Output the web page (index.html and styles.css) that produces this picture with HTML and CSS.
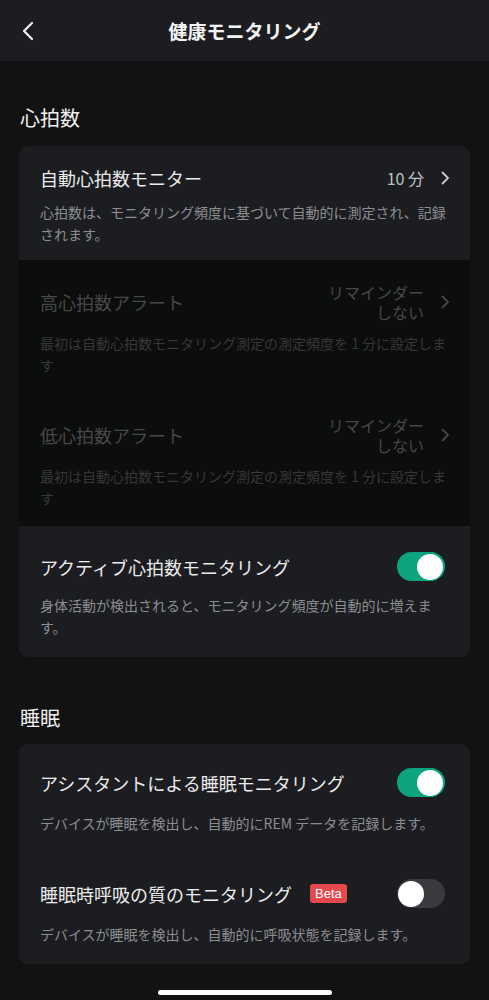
FILE: index.html
```html
<!DOCTYPE html>
<html lang="ja">
<head>
    <meta charset="UTF-8">
    <meta name="viewport" content="width=device-width, initial-scale=1.0">
    <title>健康モニタリング</title>
    <link rel="stylesheet" href="styles.css">
</head>
<body>
    <header class="topbar">
        <div class="back">
            <svg width="14" height="20" viewBox="0 0 14 20"><path d="M11 2 L3 10 L11 18" fill="none" stroke="#f2f2f2" stroke-width="2.2" stroke-linecap="round" stroke-linejoin="round"/></svg>
        </div>
        <h1>健康モニタリング</h1>
        <div class="back"></div>
    </header>

    <main>
        <h2 class="section-title">心拍数</h2>
        <div class="card">
            <div class="row row-first">
                <div class="row-head">
                    <span class="row-title">自動心拍数モニター</span>
                    <span class="value">10 分</span>
                    <svg class="chev" width="9" height="14" viewBox="0 0 9 14"><path d="M1.5 1.5 L7 7 L1.5 12.5" fill="none" stroke="#c9c9cb" stroke-width="1.8" stroke-linecap="round" stroke-linejoin="round"/></svg>
                </div>
                <p class="desc">心拍数は、モニタリング頻度に基づいて自動的に測定され、記録されます。</p>
            </div>

            <div class="row row-off">
                <div class="row-head tall">
                    <span class="row-title">高心拍数アラート</span>
                    <span class="value two-line"><span>リマインダー</span><span>しない</span></span>
                    <svg class="chev" width="9" height="14" viewBox="0 0 9 14"><path d="M1.5 1.5 L7 7 L1.5 12.5" fill="none" stroke="#454648" stroke-width="1.8" stroke-linecap="round" stroke-linejoin="round"/></svg>
                </div>
                <p class="desc">最初は自動心拍数モニタリング測定の測定頻度を 1 分に設定します</p>
            </div>

            <div class="row row-off">
                <div class="row-head tall">
                    <span class="row-title">低心拍数アラート</span>
                    <span class="value two-line"><span>リマインダー</span><span>しない</span></span>
                    <svg class="chev" width="9" height="14" viewBox="0 0 9 14"><path d="M1.5 1.5 L7 7 L1.5 12.5" fill="none" stroke="#454648" stroke-width="1.8" stroke-linecap="round" stroke-linejoin="round"/></svg>
                </div>
                <p class="desc">最初は自動心拍数モニタリング測定の測定頻度を 1 分に設定します</p>
            </div>

            <div class="row row-toggle">
                <div class="row-head">
                    <span class="row-title">アクティブ心拍数モニタリング</span>
                    <span class="toggle on"><span class="knob"></span></span>
                </div>
                <p class="desc">身体活動が検出されると、モニタリング頻度が自動的に増えます。</p>
            </div>
        </div>

        <h2 class="section-title sleep">睡眠</h2>
        <div class="card">
            <div class="row row-sleep">
                <div class="row-head">
                    <span class="row-title">アシスタントによる睡眠モニタリング</span>
                    <span class="toggle on"><span class="knob"></span></span>
                </div>
                <p class="desc">デバイスが睡眠を検出し、自動的にREM データを記録します。</p>
            </div>
            <div class="row row-sleep last">
                <div class="row-head">
                    <span class="row-title">睡眠時呼吸の質のモニタリング <span class="beta">Beta</span></span>
                    <span class="toggle"><span class="knob"></span></span>
                </div>
                <p class="desc">デバイスが睡眠を検出し、自動的に呼吸状態を記録します。</p>
            </div>
        </div>
    </main>

    <div class="home-bar"></div>
</body>
</html>
```

FILE: styles.css
```css
body {
    margin: 0;
    background-color: #121213;
    color: #ececec;
    font-family: "Noto Sans CJK JP", "Noto Sans", sans-serif;
}
.topbar {
    height: 61px;
    background-color: #1c1d20;
    display: grid;
    grid-template-columns: 60px 1fr 60px;
    align-items: center;
}
.back {
    display: flex;
    padding-left: 21px;
    padding-top: 1px;
}
.topbar h1 {
    margin: 0;
    text-align: center;
    font-size: 19px;
    font-weight: 700;
    color: #f4f4f4;
}
main {
    padding: 0 19px;
}
.section-title {
    margin: 43px 0 14px 1px;
    font-size: 20px;
    font-weight: 400;
    line-height: 28px;
    color: #f0f0f0;
}
.section-title.sleep {
    margin-top: 47px;
    margin-bottom: 12px;
}
.card {
    background-color: #1c1d20;
    border-radius: 9px;
    overflow: hidden;
}
.row {
    padding: 0 20px 0 21px;
}
.row-head {
    display: flex;
    align-items: center;
    min-height: 24px;
}
.row-head.tall {
    min-height: 40px;
}
.row-title {
    flex: 1;
    font-size: 18px;
    line-height: 24px;
    display: flex;
    align-items: center;
}
.value {
    font-size: 16px;
    line-height: 20px;
    text-align: right;
    color: #bfc0c2;
    margin-right: 17px;
}
.two-line {
    display: flex;
    flex-direction: column;
    align-items: flex-end;
}
.two-line span {
    height: 20px;
    line-height: 20px;
    overflow: visible;
}
.chev {
    flex: none;
}
.desc {
    margin: 0;
    font-size: 14px;
    line-height: 22px;
    color: #8c8d90;
}
.row-first {
    padding-top: 20px;
    padding-bottom: 15px;
}
.row-first .desc {
    margin-top: 11px;
}
.row-off {
    background-color: #0c0d0d;
    padding-top: 22px;
    padding-bottom: 17px;
}
.row-off .row-title,
.row-off .value {
    color: #47484a;
}
.row-off .desc {
    margin-top: 10px;
    color: #36373a;
}
.row-toggle {
    padding-top: 26px;
    padding-bottom: 19px;
}
.row-toggle .desc {
    margin-top: 13px;
}
.row-sleep {
    padding-top: 24px;
    padding-bottom: 21px;
}
.row-sleep .desc {
    margin-top: 15px;
}
.row-sleep.last {
    padding-bottom: 19px;
}
.toggle {
    flex: none;
    width: 48px;
    height: 29px;
    border-radius: 15px;
    background-color: #3a3b3e;
    display: flex;
    align-items: center;
    padding: 0 2px;
    box-sizing: border-box;
    margin-right: 5px;
}
.toggle.on {
    background-color: #0ea47e;
    justify-content: flex-end;
}
.knob {
    width: 26px;
    height: 26px;
    border-radius: 50%;
    background-color: #ffffff;
}
.toggle .knob {
    margin-left: -1px;
}
.beta {
    margin-left: 18px;
    background-color: #e5484d;
    color: #ffffff;
    font-family: "Liberation Sans", Arial, sans-serif;
    font-size: 13px;
    line-height: 19px;
    padding: 0 5px;
    border-radius: 3px;
}
.home-bar {
    width: 174px;
    height: 5px;
    border-radius: 3px;
    background-color: #ffffff;
    margin: 26px auto 0;
}
```
